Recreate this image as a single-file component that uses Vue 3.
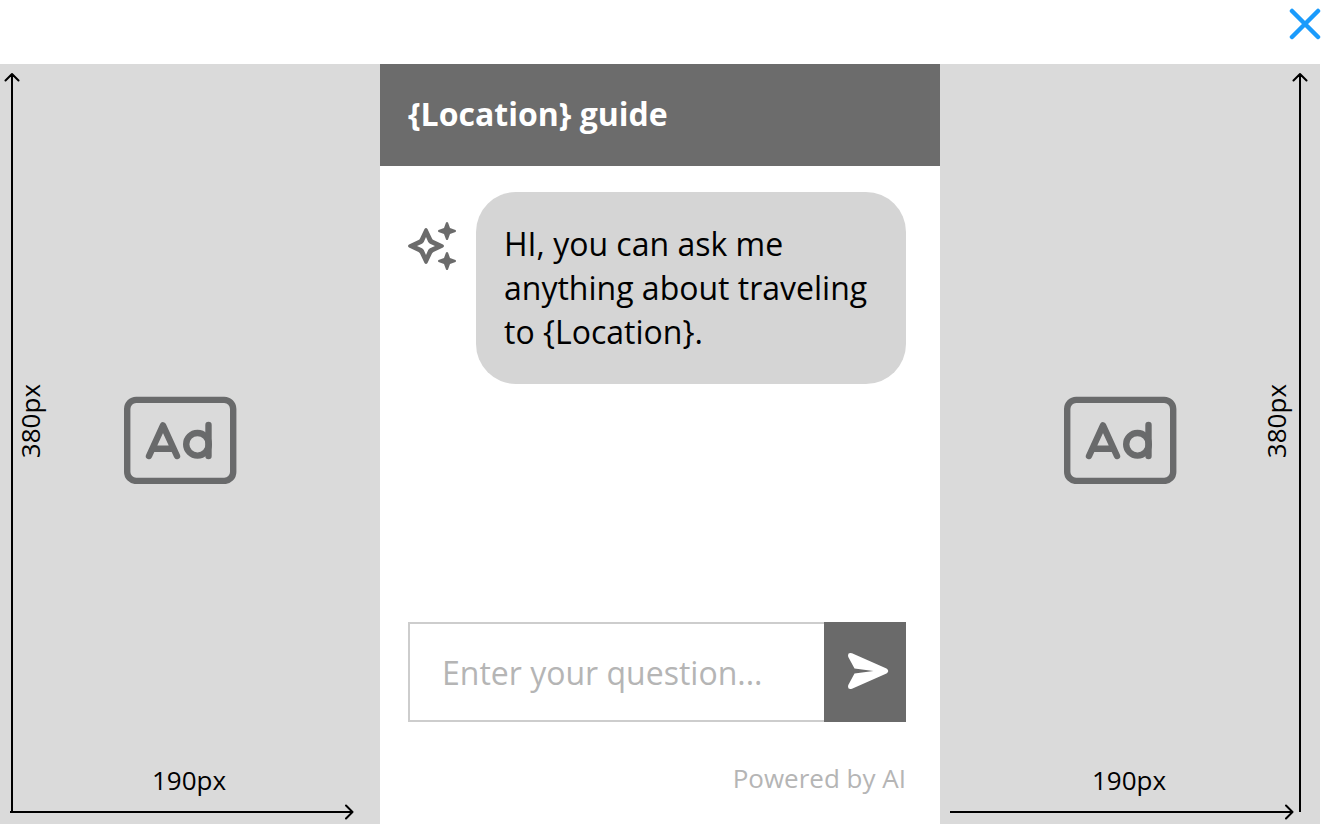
<script setup>
import { ref } from 'vue'

const question = ref('')
const sides = ['left', 'right']
</script>

<template>
  <div class="page">
    <div class="topbar">
      <button class="close" type="button" aria-label="Close">
        <svg width="32" height="32" viewBox="0 0 32 32" fill="none" stroke="#1a9bfc" stroke-width="4.5" stroke-linecap="round">
          <path d="M3 3 29 29M29 3 3 29" />
        </svg>
      </button>
    </div>

    <div class="columns">
      <aside v-for="side in sides" :key="side" class="ad" :class="side">
        <div class="arrow-up">
          <svg width="16" height="10" viewBox="0 0 16 10" fill="none" stroke="#000" stroke-width="2" stroke-linecap="round" stroke-linejoin="round">
            <path d="M1.5 8.5 8 2 14.5 8.5M8 2V10" />
          </svg>
          <span class="line-y"></span>
        </div>
        <span class="height-label">380px</span>
        <svg class="ad-icon" width="114" height="88" viewBox="0 0 114 88" fill="none" stroke="#696a6b" stroke-width="6.400" stroke-linecap="round" stroke-linejoin="round" role="img" aria-label="Advertisement">
          <rect x="4.200" y="3.900" width="106" height="81" rx="9" />
          <path d="M26 60 40 29.300 54 60M32 52.800H49" />
          <circle cx="74.500" cy="48.300" r="11.300" />
          <path d="M85.500 29V60" />
        </svg>
        <span class="width-label">190px</span>
        <div class="arrow-right">
          <span class="line-x"></span>
          <svg width="10" height="16" viewBox="0 0 10 16" fill="none" stroke="#000" stroke-width="2" stroke-linecap="round" stroke-linejoin="round">
            <path d="M2 1.500 8.500 8 2 14.500M0 8H8" />
          </svg>
        </div>
      </aside>

      <main class="chat">
        <h1 class="title">{Location} guide</h1>
        <div class="body">
          <div class="message">
            <svg class="sparkle" width="48" height="48" viewBox="0 0 48 48" fill="#6b6b6b">
              <path fill-rule="evenodd" d="M16.500 7Q18 5 19.500 7L24 16.500Q24.500 17.500 25.500 18L35 22.500Q37 24 35 25.500L25.500 30Q24.500 30.500 24 31.500L19.500 41Q18 43 16.500 41L12 31.500Q11.500 30.500 10.500 30L1 25.500Q-1 24 1 22.500L10.500 18Q11.500 17.500 12 16.500ZM18 15L15.800 20Q15 21.300 14 21.800L9 24 14 26.200Q15 26.700 15.800 28L18 33 20.200 28Q21 26.700 22 26.200L27 24 22 21.800Q21 21.300 20.200 20Z" />
              <path d="M38 .5Q39 -.5 40 .5L42 6 47.500 8Q48.500 9 47.500 10L42 12 40 17.500Q39 18.500 38 17.500L36 12 30.500 10Q29.500 9 30.500 8L36 6Z" />
              <path d="M38 30.500Q39 29.500 40 30.500L42 36 47.500 38Q48.500 39 47.500 40L42 42 40 47.500Q39 48.500 38 47.500L36 42 30.500 40Q29.500 39 30.500 38L36 36Z" />
            </svg>
            <p class="bubble">HI, you can ask me anything about traveling to {Location}.</p>
          </div>
          <form class="ask" @submit.prevent>
            <input v-model="question" class="field" type="text" aria-label="Your question" placeholder="Enter your question..." />
            <button class="send" type="submit" aria-label="Send">
              <svg width="42" height="38" viewBox="0 0 42 38" fill="#fff">
                <path d="M1.300 5Q0 0 5 1.300L39.500 16.500Q43 19 39.500 21.500L5 36.700Q0 38 1.300 33L7.500 21.500 26.500 19 7.500 16.500Z" />
              </svg>
            </button>
          </form>
          <p class="powered">Powered by AI</p>
        </div>
      </main>
    </div>
  </div>
</template>

<style>
body {
  margin: 0;
  background: #fff;
}
</style>

<style scoped>
.page {
  display: flex;
  flex-direction: column;
  min-height: 100vh;
  padding-right: 1px;
  box-sizing: border-box;
  font-family: "Open Sans", "Noto Sans", sans-serif;
  color: #000;
}
.topbar {
  display: flex;
  justify-content: flex-end;
  height: 64px;
}
button {
  border: 0;
  padding: 0;
  cursor: pointer;
}
svg {
  display: block;
  flex: none;
}
.close {
  width: 32px;
  height: 32px;
  margin-top: 8px;
  margin-right: -1px;
  background: none;
}
.columns {
  flex: 1;
  display: grid;
  grid-template-columns: 19fr 28fr 19fr;
}
.ad {
  display: grid;
  grid-template-rows: 1fr 36px 26px;
  grid-row: 1;
  background: #dadada;
}
.left {
  grid-template-columns: 20px 20px 1fr;
  grid-column: 1;
}
.right {
  grid-template-columns: 1fr 20px 34px;
  grid-column: 3;
}
.arrow-up {
  grid-row: 1 / -1;
  display: flex;
  flex-direction: column;
  align-items: center;
  width: 16px;
  padding: 8px 0 12px;
}
.left .arrow-up {
  grid-column: 1;
  margin-left: 4px;
}
.right .arrow-up {
  grid-column: 3;
  margin-left: 6px;
}
.line-y {
  flex: 1;
  width: 2px;
  background: #000;
}
.height-label {
  grid-row: 1 / -1;
  grid-column: 2;
  align-self: center;
  justify-self: center;
  margin-bottom: 46px;
  writing-mode: vertical-rl;
  transform: rotate(180deg);
  font-size: 26px;
  line-height: 28px;
}
.ad-icon {
  grid-row: 1 / -1;
  grid-column: 1 / -1;
  place-self: center;
  margin: 0 20px 8px 0;
}
.width-label {
  grid-row: 2;
  grid-column: 1 / -1;
  justify-self: center;
  padding-right: 2px;
  font-size: 26px;
  line-height: 36px;
}
.arrow-right {
  grid-row: 3;
  grid-column: 1 / -1;
  display: flex;
  align-items: center;
  align-self: end;
  margin: 0 26px 4px 10px;
}
.line-x {
  flex: 1;
  height: 2px;
  background: #000;
}
.chat {
  grid-row: 1;
  grid-column: 2;
  display: flex;
  flex-direction: column;
  min-width: 0;
}
.title {
  margin: 0;
  padding: 28px 28px 30px;
  background: #6c6c6c;
  color: #fff;
  font-size: 32px;
  line-height: 44px;
  font-weight: 700;
}
.body {
  flex: 1;
  display: flex;
  flex-direction: column;
  padding: 26px 34px 28px 28px;
}
.message {
  display: flex;
  align-items: flex-start;
  gap: 20px;
}
.sparkle {
  margin-top: 30px;
}
.bubble {
  flex: 1;
  margin: 0;
  padding: 30px 28px;
  border-radius: 40px;
  box-sizing: border-box;
  background: #d5d5d5;
  font-size: 32px;
  line-height: 44px;
}
.ask {
  display: flex;
  height: 100px;
  margin-top: auto;
}
.field {
  flex: 1;
  min-width: 0;
  box-sizing: border-box;
  border: 2px solid #cdcdcd;
  border-right: 0;
  border-radius: 0;
  padding: 0 32px;
  background: #fff;
  color: #000;
  font: inherit;
  font-size: 32px;
}
.field::placeholder {
  color: #b5b5b5;
  opacity: 1;
}
.send {
  display: flex;
  align-items: center;
  justify-content: center;
  width: 82px;
  padding: 0 0 2px 6px;
  background: #6a6a6a;
}
.powered {
  margin: 38px 0 0;
  text-align: right;
  color: #b5b5b5;
  font-size: 26px;
  line-height: 36px;
}
</style>
